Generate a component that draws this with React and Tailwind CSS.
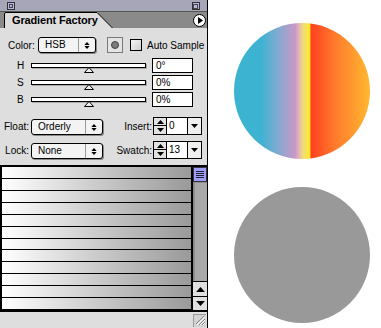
const Up = ({ w = 7, h = 4 }) => (
  <svg width={w} height={h} viewBox="0 0 7 4">
    <path d="M3.5 0 L7 4 H0Z" fill="#000" />
  </svg>
);

const Down = ({ w = 7, h = 4 }) => (
  <svg width={w} height={h} viewBox="0 0 7 4">
    <path d="M0 0 H7 L3.5 4Z" fill="#000" />
  </svg>
);

const Popup = ({ label, width }) => (
  <div
    className={`flex h-[16px] ${width} rounded-[3px] border border-black bg-[#f3f3f3] shadow-[1px_1px_0_#8a8a8a]`}
  >
    <span className="flex-1 pl-[6px] leading-[14px]">{label}</span>
    <span className="flex w-[17px] flex-col items-center justify-center gap-[1px] border-l border-[#9a9a9a]">
      <Up w={6} h={3} />
      <Down w={6} h={3} />
    </span>
  </div>
);

const SliderRow = ({ label, value }) => (
  <div className="flex h-[15px] items-center">
    <span className="w-[31px] pl-[17px] leading-none">{label}</span>
    <div className="relative h-[5px] w-[115px] border border-black bg-white shadow-[1px_1px_0_#aaa]">
      <svg
        className="absolute left-[52px] top-[3px]"
        width="10"
        height="6"
        viewBox="0 0 10 6"
      >
        <path d="M5 0.5 L9.5 5.5 H0.5Z" fill="#eee" stroke="#000" />
      </svg>
    </div>
    <div className="ml-[6px] h-[15px] w-[41px] border border-black bg-white pl-[3px] leading-[13px]">
      {value}
    </div>
  </div>
);

const SpinField = ({ label, value, labelWidth }) => (
  <div className="flex items-center">
    <span className={`${labelWidth} pr-[1px] text-right`}>{label}</span>
    <div className="flex h-[18px] w-[14px] flex-col border border-black bg-[#e2e2e2]">
      <span className="flex h-[8px] items-center justify-center border-b border-black">
        <Up w={7} h={4} />
      </span>
      <span className="flex flex-1 items-center justify-center">
        <Down w={7} h={4} />
      </span>
    </div>
    <div className="flex h-[18px] w-[35px] border border-l-0 border-black bg-white">
      <span className="flex-1 pl-[2px] leading-[16px]">{value}</span>
      <span className="flex w-[14px] items-center justify-center border-l border-black bg-[#efefef]">
        <Down w={7} h={4} />
      </span>
    </div>
  </div>
);

const rows = Array.from({ length: 12 }, (_, i) => i);

export default function App() {
  return (
    <div className="flex h-[328px] w-[381px] bg-white font-['Liberation_Sans',Arial,sans-serif] text-[10px] text-black">
      <div className="flex w-[208px] flex-col border-r border-black">
        {/* title bar */}
        <div className="flex h-[12px] items-center justify-between border-b border-[#555] bg-[#d6d6de] bg-[radial-gradient(circle,#8c8ca4_0.6px,transparent_0.9px)] bg-[length:2px_2px] px-[7px]">
          <span className="flex h-[8px] w-[8px] items-center justify-center border border-[#333] bg-[#b6b6e6]">
            <span className="h-[4px] w-[4px] border border-[#444]" />
          </span>
          <span className="flex h-[8px] w-[8px] items-end justify-start border border-[#333] bg-[#b6b6e6]">
            <span className="h-[5px] w-[5px] border border-[#444]" />
          </span>
        </div>

        {/* tab strip */}
        <div className="relative flex h-[16px] items-end bg-[#8a8a8a]">
          <svg className="absolute left-0 top-0" width="207" height="16" viewBox="0 0 207 16">
            <path d="M4.5 16 V2 Q4.5 0.5 6 0.5 H97 L112.5 16" fill="#dedede" stroke="#000" />
          </svg>
          <span className="relative ml-[12px] pb-[1px] text-[11px] font-bold leading-[14px] tracking-[-0.15px]">
            Gradient Factory
          </span>
          <span className="absolute right-[1px] top-[2px] flex h-[13px] w-[13px] items-center justify-center rounded-full border border-black bg-white">
            <svg width="5" height="7" viewBox="0 0 5 7" className="ml-[1px]">
              <path d="M0 0 L5 3.5 L0 7Z" fill="#000" />
            </svg>
          </span>
        </div>

        {/* body */}
        <div className="flex h-[137px] flex-col bg-[#dedede] pt-[9px]">
          <div className="flex h-[16px] items-center">
            <span className="ml-[8px] w-[30px]">Color:</span>
            <Popup label="HSB" width="w-[58px]" />
            <span className="ml-[11px] flex h-[16px] w-[16px] items-center justify-center border border-[#7a7a7a] bg-[#e4e4e4]">
              <span className="h-[8px] w-[8px] rounded-full border border-[#444] bg-[#7c7c7c]" />
            </span>
            <span className="ml-[7px] h-[12px] w-[12px] border border-black bg-gradient-to-br from-[#f4f4f4] to-[#cfcfcf]" />
            <span className="ml-[5px] whitespace-nowrap">Auto Sample</span>
          </div>

          <div className="mt-[5px] flex flex-col gap-[2px]">
            <SliderRow label="H" value="0°" />
            <SliderRow label="S" value="0%" />
            <SliderRow label="B" value="0%" />
          </div>

          <div className="mt-[10px] flex h-[18px] items-center">
            <span className="w-[29px] text-right">Float:</span>
            <span className="ml-[2px] mt-[2px]">
              <Popup label="Orderly" width="w-[72px]" />
            </span>
            <SpinField label="Insert:" value="0" labelWidth="w-[50px]" />
          </div>
          <div className="mt-[6px] flex h-[18px] items-center">
            <span className="w-[29px] text-right">Lock:</span>
            <span className="ml-[2px] mt-[2px]">
              <Popup label="None" width="w-[72px]" />
            </span>
            <SpinField label="Swatch:" value="13" labelWidth="w-[50px]" />
          </div>
        </div>

        {/* swatch list */}
        <div className="flex h-[147px] border-y-2 border-black">
          <div className="flex w-[193px] flex-col border-x-2 border-black">
            {rows.map((i) => (
              <div
                key={i}
                className="h-[12px] border-b border-black bg-gradient-to-r from-white to-[#9a9a9a]"
              />
            ))}
          </div>
          <div className="flex w-[14px] flex-col bg-[#a9a9a9]">
            <div className="flex h-[15px] flex-col items-center justify-center gap-[1px] border border-[#334] bg-[#9e9ef6]">
              <span className="h-[1px] w-[8px] bg-[#223]" />
              <span className="h-[1px] w-[8px] bg-[#223]" />
              <span className="h-[1px] w-[8px] bg-[#223]" />
              <span className="h-[1px] w-[8px] bg-[#223]" />
            </div>
            <div className="flex-1 border-l border-[#888] shadow-[inset_1px_1px_0_#8f8f8f]" />
            <div className="flex h-[15px] items-center justify-center border-t border-black bg-[#e0e0e0]">
              <Up w={9} h={5} />
            </div>
            <div className="flex h-[14px] items-center justify-center border-t border-black bg-[#e0e0e0]">
              <Down w={9} h={5} />
            </div>
          </div>
        </div>

        {/* status bar */}
        <div className="flex h-[16px] items-center justify-end bg-[#dedede]">
          <span className="mr-[1px] flex h-[13px] w-[13px] items-center justify-center border-l border-t border-[#999] bg-[#d2d2d2]">
            <svg width="11" height="11" viewBox="0 0 11 11">
              <path d="M10 2 L2 10 M10 5 L5 10 M10 8 L8 10" stroke="#fff" strokeWidth="1" />
              <path d="M9 1 L1 9 M10 4 L4 10 M10 7 L7 10" stroke="#888" strokeWidth="1" />
            </svg>
          </span>
        </div>
      </div>

      {/* preview circles */}
      <div className="flex flex-1 flex-col gap-[28px] pl-[26px] pt-[23px]">
        <div className="h-[136px] w-[136px] rounded-full bg-[linear-gradient(to_right,#3bb4d1_0%,#3db3d1_20%,#86a9d0_33%,#c898c8_45%,#e6b8b4_48%,#f2dc70_51%,#f8e842_55%,#ffe800_55.8%,#ff4020_56.6%,#ff7a2c_74%,#ffb830_100%)]" />
        <div className="h-[136px] w-[136px] rounded-full bg-[#999999]" />
      </div>
    </div>
  );
}
